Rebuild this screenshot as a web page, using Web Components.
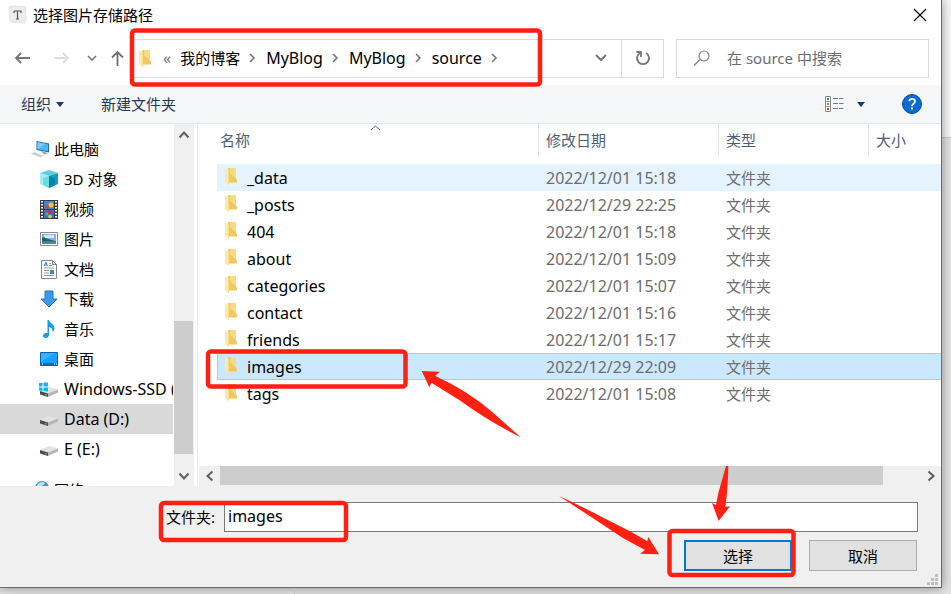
<!DOCTYPE html>
<html lang="zh-CN">
<head>
<meta charset="utf-8">
<title>选择图片存储路径</title>
<style>
  html, body { height: 100%; }
  body {
    margin: 0; overflow: hidden; position: relative;
    background: #e2e2e2;
    font: 15px/20px "Noto Sans", "Noto Sans CJK SC", sans-serif;
    color: #000;
    --latin: 16px;
    --line: #d9d9d9;
    --face: #f0f0f0;
    --thumb: #cdcdcd;
    --ink: #1e395b;
  }
</style>
</head>
<body>
<file-dialog>
  <title-bar slot="title">选择图片存储路径</title-bar>
  <nav-bar slot="nav">
    <path-crumb slot="crumb" cjk>我的博客</path-crumb>
    <path-crumb slot="crumb">MyBlog</path-crumb>
    <path-crumb slot="crumb">MyBlog</path-crumb>
    <path-crumb slot="crumb">source</path-crumb>
  </nav-bar>
  <command-bar slot="commands"></command-bar>
  <side-tree slot="tree">
    <tree-item icon="pc" root>此电脑</tree-item>
    <tree-item icon="cube">3D 对象</tree-item>
    <tree-item icon="film">视频</tree-item>
    <tree-item icon="picture">图片</tree-item>
    <tree-item icon="doc">文档</tree-item>
    <tree-item icon="down">下载</tree-item>
    <tree-item icon="music">音乐</tree-item>
    <tree-item icon="desk">桌面</tree-item>
    <tree-item icon="windrive" latin>Windows-SSD (C:)</tree-item>
    <tree-item icon="drive" latin selected>Data (D:)</tree-item>
    <tree-item icon="drive" latin>E (E:)</tree-item>
    <tree-item icon="net" root apart>网络</tree-item>
  </side-tree>
  <file-table slot="files"></file-table>
  <dialog-footer slot="footer"></dialog-footer>
</file-dialog>
<mark-layer></mark-layer>

<script>
function define(name, html, setup) {
  const template = document.createElement('template');
  template.innerHTML = html;
  customElements.define(name, class extends HTMLElement {
    constructor() {
      super();
      this.attachShadow({ mode: 'open' }).append(template.content.cloneNode(true));
    }
    connectedCallback() { if (setup && !this.ready) { this.ready = true; setup(this, this.shadowRoot); } }
  });
}

const reset = `:host,*{box-sizing:border-box}button{font:inherit;color:inherit;background:none;border:0;padding:0;margin:0;display:flex;align-items:center;justify-content:center}input{font:inherit;color:inherit;border:0;margin:0;padding:0;background:none;outline:0;min-width:0}svg{display:block;flex:none}`;

const folder = `<svg width="13" height="17" viewBox="0 0 13 17"><path d="M3 0h8v10.500l1 1.500v2.500H3z" fill="#f0c862"/><path d="M5 0h6v10.500l-6-5z" fill="#f8da80"/><path d="M0 .5 4 2v15L0 14.500z" fill="#ffe9a6"/><path d="M4 2v15l-1-.4V1.600z" fill="#f9dc8c"/></svg>`;

const icons = {
  pc: `<svg width="20" height="18" viewBox="0 0 20 18"><path d="m6.500 1 12.500 2.500v9L6.500 10z" fill="#1c6ea8"/><path d="m7.500 2.300 10.500 2v7L7.500 9.200z" fill="#4db4f5"/><path d="m7.500 2.300 8 1.500-8 5.400z" fill="#7fcbfa"/><path d="m11 11 4 1 3 1.500-4 1z" fill="#9aa5ad"/><path d="m0 13.500 5-1.500 9 3.500-4 2z" fill="#dde2e6"/><path d="m2 13.500 9 3M4 13l8 3" stroke="#b4bdc3" stroke-width=".5"/></svg>`,
  cube: `<svg width="18" height="18" viewBox="0 0 18 18"><path d="m9 0 9 3-9 3-9-3z" fill="#5cd0dd"/><path d="m0 3 9 3v12l-9-4z" fill="#a3ecf0"/><path d="m18 3-9 3v12l9-4z" fill="#0f9fc0"/><path d="m3 8 6-2v12l-6-3z" fill="#6adbe3"/><path d="m15 8-6-2v12l6-3z" fill="#0783a9"/></svg>`,
  film: `<svg width="18" height="19" viewBox="0 0 18 19"><path d="M0 0h18v19H0z" fill="#3a3a3a"/><path d="M4 1h10v8H4z" fill="#4385dc"/><path d="M4 10h10v8H4z" fill="#3a6fd0"/><circle cx="11" cy="5" r="2.500" fill="#f3c62d"/><circle cx="7" cy="7" r="2" fill="#d44237"/><circle cx="10" cy="12" r="2" fill="#c8342b"/><circle cx="7" cy="14" r="1.600" fill="#74a83b"/><circle cx="10" cy="16.500" r="1.800" fill="#f3c62d"/><path d="M2 1v18M16 1v18" stroke="#fff" stroke-width="2" stroke-dasharray="1.500 1.500"/></svg>`,
  picture: `<svg width="18" height="14" viewBox="0 0 18 14"><path d="M.5.5h17v13H.5z" fill="#fff" stroke="#8b8b8b"/><path d="M2 2h14v10H2z" fill="#7eb5ec"/><path d="M4 3h10v3H5z" fill="#d6ebfb"/><path d="M2 5c5 1 7 3 14 4v1H2z" fill="#2f6257"/><path d="M2 9.500h14V12H2z" fill="#4d86b3"/></svg>`,
  doc: `<svg width="16" height="19" viewBox="0 0 16 19"><path d="M.5.500h11l4 4v14H.5z" fill="#fff" stroke="#868686"/><path d="M11.500.500v4h4z" fill="#ddd" stroke="#868686"/><path d="m3 6 2-4 1.500 4M4 5h2" fill="none" stroke="#2b83c9"/><path d="M8 3.500h2M8 5.500h3M3 8h10M3 10.500h5M3 13h5M3 15.500h10" stroke="#8d9ba4"/><path d="M9 10h4v4H9z" fill="#3b87bf"/></svg>`,
  down: `<svg width="18" height="18" viewBox="0 0 18 18"><path d="M5 1h8v8h4l-8 8-8-8h4z" fill="#3b9aed" stroke="#2479c4"/></svg>`,
  music: `<svg width="12" height="18" viewBox="0 0 12 18"><path d="M4.500 0H6c.4 3 5.500 4.500 5.500 8 0 1.500-.8 3-1.800 4C10 9 8 7.300 6 7v7.500C6 16.500 4.500 18 2.800 18 1 18 0 17 0 15.700 0 14 2 12.600 4.500 13z" fill="#149aec"/></svg>`,
  desk: `<svg width="18" height="14" viewBox="0 0 18 14"><path d="M.5.500h17v13H.5z" fill="#18a0fb" stroke="#0c62a5"/><path d="M1 11h16v2H1z" fill="#0c6cb5"/><path d="M2 12h1M14 12h1M16 12h1" stroke="#fff"/><path d="m1 10 14-9H1z" fill="#39b0ff"/></svg>`,
  drive: `<svg width="18" height="14" viewBox="0 0 18 14"><path d="m0 8 9-4 9 2.500-10 4z" fill="#e2e2e4"/><path d="m0 8 8 2.500V14l-8-2.500z" fill="#4b4d4c"/><path d="m8 10.500 10-4v3L8 14z" fill="#b5b6b9"/><path d="m5 11.500 2 .6" stroke="#62cf5a"/></svg>`,
  windrive: `<svg width="19" height="15" viewBox="0 0 19 15"><path d="m1 9 9-4 9 2.500-10 4z" fill="#e2e2e4"/><path d="m1 9 8 2.500V15l-8-2.500z" fill="#4b4d4c"/><path d="m9 11.500 10-4v3L9 15z" fill="#b5b6b9"/><path d="m6 12.500 2 .6" stroke="#62cf5a"/><path d="M0 1h3.500v3.500H0zM4.500.500H9v4H4.500zM0 5.500h3.500V9L0 8.500zM4.500 5.500H9v4l-4.500-.5z" fill="#12b5ee"/></svg>`,
  net: `<svg width="20" height="18" viewBox="0 0 20 18"><circle cx="12" cy="7" r="7" fill="#4795be"/><path d="M7 4c3-4 7-3 8-2-1 3-3 2-4 4s-3 2-4 0z" fill="#b9e0ee"/><path d="m0 6 6-1v9l-6-2z" fill="#6f98ad"/></svg>`
};

define('file-dialog', `<style>${reset}
  :host{display:block;height:100%;padding:0 9px 6px 0;background:linear-gradient(#f6f6f6 0 137px,#c8c8c8 137px 138px,#e2e2e2 138px)}
  .win{height:100%;display:flex;flex-direction:column;background:#fff;border:solid #6b6b6b;border-width:0 1px 1px 0;box-shadow:0 0 10px #0006}
  .mid{flex:1;min-height:0;display:flex}
  ::slotted([slot=tree]){flex:none;width:194px}
  ::slotted([slot=files]){flex:1;min-width:0;margin-left:3px}
</style><main class="win"><slot name="title"></slot><slot name="nav"></slot><slot name="commands"></slot><div class="mid"><slot name="tree"></slot><slot name="files"></slot></div><slot name="footer"></slot></main>`);

define('title-bar', `<style>${reset}
  :host{display:flex;align-items:center;height:31px;padding:0 14px 2px 8px;gap:5px}
  span{flex:1}
</style>
<svg width="20" height="19" viewBox="0 0 20 19"><path d="m3 1 15 1-1 16-14-1z" fill="#f4f4f4" stroke="#e4e4e4"/><path d="m1 2 16-1 1 15-16 1z" fill="#ececec" stroke="#e6e6e6"/><path d="M6 6h7v2M6 8V6M9.500 6v8M8 14h3" fill="none" stroke="#555" stroke-width="1.200"/></svg>
<span><slot></slot></span>
<button aria-label="关闭"><svg width="14" height="14" viewBox="0 0 14 14"><path d="m1 1 12 12M13 1 1 13" stroke="#000" stroke-width="1.200"/></svg></button>`);

define('path-crumb', `<style>${reset}
  :host{display:flex;align-items:center}
  button{font-size:var(--latin)} :host([cjk]) button{font-size:15px}
  svg{margin:0 10px 0 9px}
</style><button><slot></slot></button><svg width="7" height="10" viewBox="0 0 7 10"><path d="m1 1 4 4-4 4" fill="none" stroke="#777" stroke-width="1.600"/></svg>`);

define('nav-bar', `<style>${reset}
  :host{display:flex;align-items:center;height:54px;padding:0 12px 0 14px}
  .hist{display:flex;align-items:center;width:119px;padding-right:9px}
  .fwd{margin-left:22px}.recent{margin-left:17px}.up{margin-left:14px}
  .addr,.find{height:39px;border:1px solid var(--line);display:flex;align-items:center}
  .addr{flex:1;padding-left:5px}
  .back{margin:0 9px 0 11px;color:#777;font-size:var(--latin)}
  .drop{width:40px;margin-left:auto;height:100%}
  .redo{width:42px;height:100%;border-left:1px solid var(--line)}
  .find{width:253px;margin-left:12px;padding:0 17px;gap:17px}
  input{flex:1;color:#6d6d6d} input::placeholder{color:#6d6d6d;opacity:1}
</style>
<div class="hist">
<button aria-label="后退"><svg width="17" height="14" viewBox="0 0 17 14"><path d="M16 7H2m5-5L2 7l5 5" fill="none" stroke="#777" stroke-width="1.800"/></svg></button>
<button class="fwd" aria-label="前进" disabled><svg width="17" height="14" viewBox="0 0 17 14"><path d="M1 7h14M10 2l5 5-5 5" fill="none" stroke="#ddd" stroke-width="1.800"/></svg></button>
<button class="recent" aria-label="最近位置"><svg width="10" height="7" viewBox="0 0 10 7"><path d="m1 1 4 4 4-4" fill="none" stroke="#777" stroke-width="1.600"/></svg></button>
<button class="up" aria-label="上移"><svg width="13" height="16" viewBox="0 0 13 16"><path d="M6.500 16V2M1 7.500 6.500 2 12 7.500" fill="none" stroke="#707070" stroke-width="1.800"/></svg></button>
</div>
<div class="addr">${folder}<span class="back">«</span><slot name="crumb"></slot>
<button class="drop" aria-label="历史"><svg width="12" height="8" viewBox="0 0 12 8"><path d="m1 1 5 5 5-5" fill="none" stroke="#777" stroke-width="2"/></svg></button>
<button class="redo" aria-label="刷新"><svg width="16" height="16" viewBox="0 0 16 16"><path d="M11 3A6 6 0 1 1 5 3M1.500 2H6v5" fill="none" stroke="#777" stroke-width="1.800"/></svg></button></div>
<div class="find"><svg width="16" height="16" viewBox="0 0 16 16"><circle cx="10" cy="6" r="5" fill="none" stroke="#888" stroke-width="1.200"/><path d="m6 9.500-6 6" stroke="#888" stroke-width="1.400"/></svg><input type="search" aria-label="搜索" placeholder="在 source 中搜索"></div>`);

define('command-bar', `<style>${reset}
  :host{display:flex;align-items:center;height:39px;padding:0 19px 0 21px;background:#f5f6f7;border-bottom:1px solid #e6e7e8;color:var(--ink)}
  .org{gap:5px;margin-right:37px}
  .view{margin-left:auto;gap:13px;margin-right:37px}
</style>
<button class="org">组织<svg width="8" height="5" viewBox="0 0 8 5"><path d="M0 0h8L4 5z" fill="#1e395b"/></svg></button>
<button>新建文件夹</button>
<button class="view" aria-label="更改视图"><svg width="19" height="16" viewBox="0 0 19 16"><path d="M.5.500h5v15h-5zM.5 5.500h5M.5 10.500h5" fill="#fff" stroke="#8a8a8a"/><path d="M8 2.500h5m1 0h4.500M8 7.500h5m1 0h4.500M8 12.500h5m1 0h4.500" stroke="#777"/><path d="M2 2h2v2H2z" fill="#3c79c3"/><path d="M2 7h2v2H2z" fill="#7f8b2c"/><path d="M2 12h2v2H2z" fill="#c33c24"/></svg><svg width="8" height="5" viewBox="0 0 8 5"><path d="M0 0h8L4 5z" fill="#1e395b"/></svg></button>
<button class="help" aria-label="帮助"><svg width="20" height="20" viewBox="0 0 20 20"><circle cx="10" cy="10" r="9.500" fill="#0a6bd0" stroke="#0a4f9c"/><path d="M7.300 7.300C7.300 4 13 4 13 7.300c0 2.200-3 2.400-3 5" fill="none" stroke="#fff" stroke-width="1.800"/><path d="M9 13.500h2v2H9z" fill="#fff"/></svg></button>`);

define('tree-item', `<style>${reset}
  :host{display:block;height:30px}
  :host([apart]){margin-top:11px}
  button{width:100%;height:100%;justify-content:flex-start;padding-left:38px;gap:5px;white-space:nowrap}
  :host([root]) button{padding-left:29px;gap:4px}
  :host([latin]) button{font-size:var(--latin)}
  :host([selected]){background:#d9d9d9}
  i{display:flex;flex:none;width:21px;justify-content:center;align-items:center}
</style><button><i></i><slot></slot></button>`, (host, root) => {
  root.querySelector('i').innerHTML = icons[host.getAttribute('icon')];
});

define('side-tree', `<style>${reset}
  :host{display:flex}
  nav{flex:1;min-width:0;padding-top:10px;overflow:hidden}
  scroll-bar{margin-left:1px}
</style><nav><slot></slot></nav><scroll-bar></scroll-bar>`);

define('scroll-bar', `<style>${reset}
  :host{display:flex;flex-direction:column;width:20px;background:var(--face);flex:none}
  :host([flat]){flex-direction:row;width:auto;height:20px}
  button{width:19px;height:21px;flex:none}
  :host([flat]) button{height:19px;width:21px}
  .track{flex:1;display:flex;flex-direction:column}
  :host([flat]) .track{flex-direction:row}
  .pre{flex:176}.thumb{flex:133;background:var(--thumb);margin-right:1px}.post{flex:11}
  :host([flat]) .pre{flex:0}:host([flat]) .thumb{flex:663;margin:0 0 1px}:host([flat]) .post{flex:37}
  :host([flat]) svg{transform:rotate(-90deg)}
</style><button aria-label="向前"><svg width="12" height="8" viewBox="0 0 12 8"><path d="m1.500 6.500 4.500-5 4.500 5" fill="none" stroke="#5f5f5f" stroke-width="2"/></svg></button>
<div class="track"><div class="pre"></div><div class="thumb"></div><div class="post"></div></div>
<button aria-label="向后"><svg width="12" height="8" viewBox="0 0 12 8"><path d="m1.500 1.500 4.500 5 4.500-5" fill="none" stroke="#5f5f5f" stroke-width="2"/></svg></button>`);

const files = [
  ['_data', '2022/12/01 15:18', 'hot'], ['_posts', '2022/12/29 22:25'], ['404', '2022/12/01 15:18'],
  ['about', '2022/12/01 15:09'], ['categories', '2022/12/01 15:07'], ['contact', '2022/12/01 15:16'],
  ['friends', '2022/12/01 15:17'], ['images', '2022/12/29 22:09', 'on'], ['tags', '2022/12/01 15:08']
];
define('file-table', `<style>${reset}
  :host{display:flex;flex-direction:column;border-left:1px solid #ececec;padding-left:1px}
  .list{flex:1;min-height:0;overflow:hidden;padding-left:18px;position:relative}
  .sort{position:absolute;left:171px;top:1px}
  table{width:100%;border-collapse:separate;border-spacing:0;table-layout:fixed}
  th,td{padding:0 0 0 7px;text-align:left;font-weight:400;white-space:nowrap}
  th{height:33px;padding-bottom:2px;color:#4c607a;border-left:1px solid #e5e5e5}
  th:first-child{border:0;padding-left:3px}
  .d{width:180px}.t{width:150px}.s{width:73px}
  .gap td{height:7px}
  td{height:27px;color:#6d6d6d;padding-left:8px;border:solid transparent;border-width:1px 0}
  .gap td{border:0}
  .n{display:flex;align-items:center;gap:9px;color:#000}
  .n svg{margin-bottom:2px}
  .l{font-size:var(--latin)}
  .hot td{background:#e5f3ff}
  .on td{background:#cce8ff;border-color:#99d1ff}
  .on td:first-child{box-shadow:inset 1px 0 #99d1ff}
</style><div class="list"><svg class="sort" width="11" height="6" viewBox="0 0 11 6"><path d="m1 5 4.500-4L10 5" fill="none" stroke="#666"/></svg>
<table><thead><tr><th>名称</th><th class="d">修改日期</th><th class="t">类型</th><th class="s">大小</th></tr><tr class="gap"><td colspan="4"></td></tr></thead><tbody></tbody></table></div>
<scroll-bar flat></scroll-bar>`, (host, root) => {
  root.querySelector('tbody').innerHTML = files.map(([name, date, state = '']) =>
    `<tr class="${state}"><td class="l"><div class="n">${folder}<span>${name}</span></div></td><td class="l">${date}</td><td>文件夹</td><td></td></tr>`).join('');
});

define('dialog-footer', `<style>${reset}
  :host{display:block;height:101px;background:var(--face);padding:16px 23px 0 166px;position:relative}
  .row{display:flex;align-items:center;gap:9px}
  input{flex:1;height:30px;border:1px solid #7a7a7a;background:#fff;padding:0 3px 3px;font-size:var(--latin)}
  .acts{display:flex;justify-content:flex-end;gap:17px;margin-top:8px;padding-right:1px}
  .acts button{width:108px;height:31px;background:#e1e1e1;border:1px solid #adadad}
  .acts .ok{border:2px solid #0078d7}
  svg{position:absolute;right:3px;bottom:2px}
</style><div class="row"><label for="f">文件夹:</label><input id="f" value="images"></div>
<div class="acts"><button class="ok">选择</button><button>取消</button></div>
<svg width="11" height="11" viewBox="0 0 11 11"><path d="M8 0h3v3H8zM4 4h3v3H4zM8 4h3v3H8zM0 8h3v3H0zM4 8h3v3H4zM8 8h3v3H8z" fill="#bfbfbf"/></svg>`);

define('mark-layer', `<style>
  :host{position:absolute;inset:0;pointer-events:none;overflow:hidden}
  svg{display:block}
</style><svg width="951" height="594" viewBox="0 0 951 594" aria-hidden="true">
<path d="M294.500 588v6" stroke="#c4c4c4"/>
<g fill="none" stroke="#ff2014" stroke-width="4.500"><rect x="132" y="30.500" width="408" height="54" rx="3"/><rect x="208" y="351.500" width="197.500" height="35" rx="3"/><rect x="161" y="503" width="185" height="37" rx="3"/><rect x="669.500" y="531" width="124" height="44" rx="3"/></g>
<g fill="#ff2014"><path d="m421.700 371 18.300.7-5 4Q468 391 492 411.700L521 437.500Q488 421 460 400.500L431.500 382.700l-2.200 4.600z"/><path d="M559 496Q583 507 603.300 517.700L630 531.300l17.300 10 1-4.300L659 554.300l-19-.6 5-3.700-21.700-11.700L590 516.300Z"/><path d="M726 466h2.300Q728 490 725.300 506.700l4.700-.4L718.700 521 712 503l4 2 2.300-12Z"/></g></svg>`);
</script>
</body>
</html>
